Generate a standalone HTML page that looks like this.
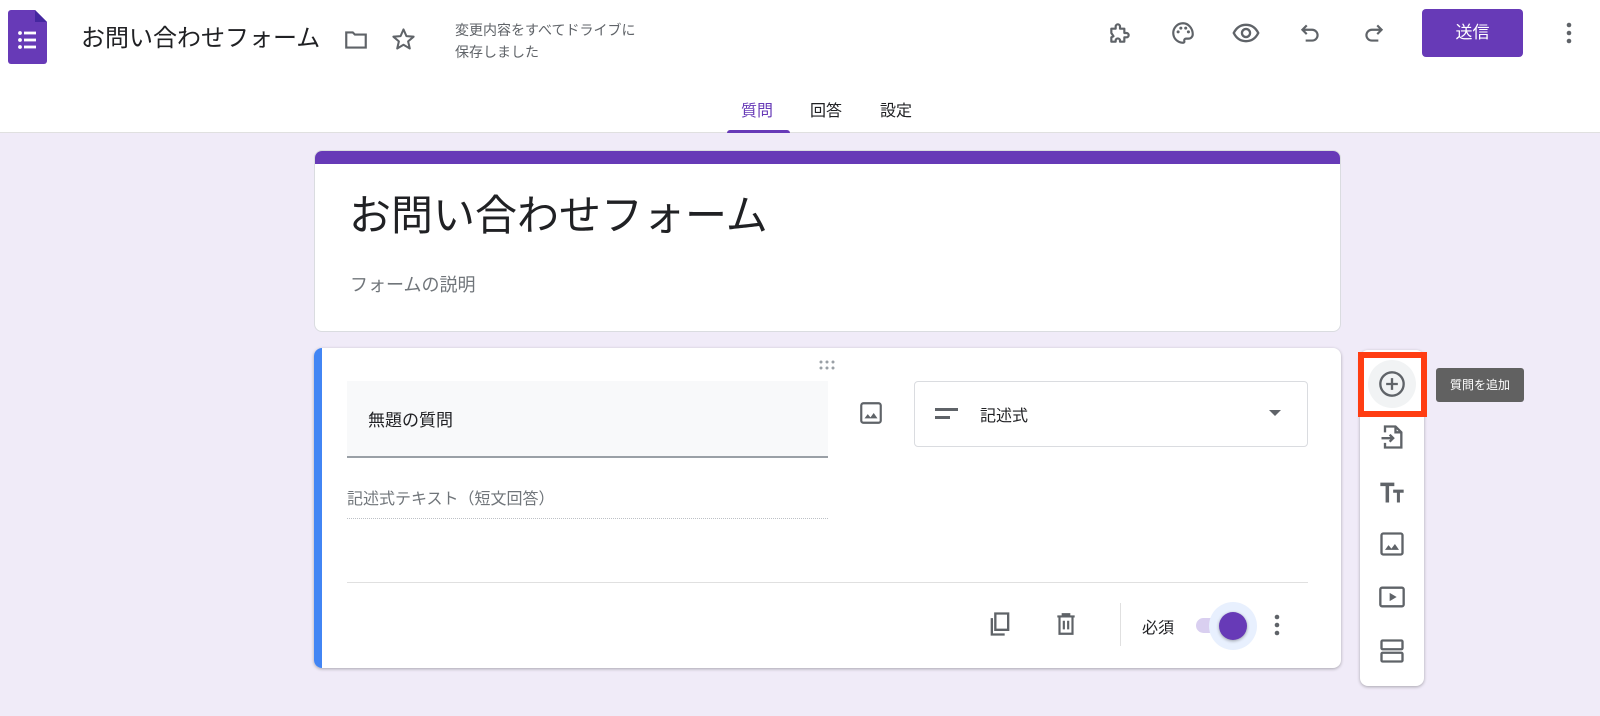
<!DOCTYPE html>
<html><head><meta charset="utf-8"><style>
*{margin:0;padding:0;box-sizing:border-box}
body{width:1600px;height:716px;background:#f0ebf8;font-family:"Liberation Sans","Noto Sans CJK JP",sans-serif;position:relative;overflow:hidden;color:#202124}
.a{position:absolute}
svg{display:block}
.ic{position:absolute}
</style></head><body>
<div class="a" style="left:0;top:0;width:1600px;height:133px;background:#fff;border-bottom:1px solid #e0e0e0"></div>
<!-- logo -->
<svg class="ic" style="left:8px;top:10px" width="39" height="54" viewBox="0 0 39 54"><path d="M3 0h24l12 12v39a3 3 0 0 1-3 3H3a3 3 0 0 1-3-3V3a3 3 0 0 1 3-3z" fill="#673ab7"/><path d="M27 0l12 12h-12z" fill="#4527a0"/><g fill="#fff"><circle cx="12" cy="23" r="1.9"/><circle cx="12" cy="30" r="1.9"/><circle cx="12" cy="37" r="1.9"/><rect x="16" y="21.6" width="12" height="2.8"/><rect x="16" y="28.6" width="12" height="2.8"/><rect x="16" y="35.6" width="12" height="2.8"/></g></svg>
<div class="a" style="left:81px;top:23px;font-size:24px;line-height:32px">お問い合わせフォーム</div>
<svg class="ic" style="left:342px;top:27px" width="28" height="26" viewBox="0 0 24 24"><path d="M3 5h6l2 2h10v12H3z" fill="none" stroke="#5f6368" stroke-width="2"/></svg>
<svg class="ic" style="left:390px;top:26px" width="27" height="27" viewBox="0 0 24 24"><path d="M12 3l2.6 6 6.4.5-4.9 4.2 1.5 6.3L12 16.7 6.4 20l1.5-6.3L3 9.5l6.4-.5z" fill="none" stroke="#5f6368" stroke-width="1.8" stroke-linejoin="round"/></svg>
<div class="a" style="left:455px;top:19px;font-size:14px;line-height:22px;color:#5f6368">変更内容をすべてドライブに<br>保存しました</div>
<!-- right icons -->
<svg class="ic" style="left:1107px;top:20px" width="26" height="26" viewBox="0 0 24 24"><path d="M4 8h4V6a2 2 0 0 1 4 0v2h4v4h2a2 2 0 0 1 0 4h-2v4h-4v-1a2 2 0 0 0-4 0v1H4v-4l2-1-2-3z" fill="none" stroke="#5f6368" stroke-width="2" stroke-linejoin="round"/></svg>
<svg class="ic" style="left:1170px;top:20px" width="26" height="26" viewBox="0 0 24 24"><path d="M12 3a9 9 0 0 0 0 18c1 0 1.5-.8 1.2-1.6-.4-1 .3-2.2 1.5-2.2H17a4 4 0 0 0 4-4c0-5.5-4-10.2-9-10.2z" fill="none" stroke="#5f6368" stroke-width="2"/><circle cx="7.5" cy="11" r="1.4" fill="#5f6368"/><circle cx="10" cy="7.5" r="1.4" fill="#5f6368"/><circle cx="14.5" cy="7.5" r="1.4" fill="#5f6368"/><circle cx="17" cy="11" r="1.4" fill="#5f6368"/></svg>
<svg class="ic" style="left:1232px;top:19px" width="28" height="28" viewBox="0 0 24 24"><path d="M1.5 12C4 7 8 5 12 5s8 2 10.5 7C20 17 16 19 12 19s-8-2-10.5-7z" fill="none" stroke="#5f6368" stroke-width="2"/><circle cx="12" cy="12" r="3.5" fill="none" stroke="#5f6368" stroke-width="2"/></svg>
<svg class="ic" style="left:1297px;top:20px" width="26" height="26" viewBox="0 0 24 24"><path d="M9 5L5 9l4 4M5 9h9a5 5 0 0 1 0 10H8" fill="none" stroke="#5f6368" stroke-width="2"/></svg>
<svg class="ic" style="left:1361px;top:20px" width="26" height="26" viewBox="0 0 24 24"><path d="M15 5l4 4-4 4M19 9h-9a5 5 0 0 0 0 10h6" fill="none" stroke="#5f6368" stroke-width="2"/></svg>
<div class="a" style="left:1422px;top:9px;width:101px;height:48px;background:#673ab7;border-radius:4px;color:#fff;font-size:17px;line-height:48px;text-align:center">送信</div>
<svg class="ic" style="left:1563px;top:20px" width="12" height="26" viewBox="0 0 12 26"><circle cx="6" cy="5" r="2.3" fill="#5f6368"/><circle cx="6" cy="13" r="2.3" fill="#5f6368"/><circle cx="6" cy="21" r="2.3" fill="#5f6368"/></svg>
<!-- tabs -->
<div class="a" style="left:741px;top:97px;font-size:16px;color:#673ab7">質問</div>
<div class="a" style="left:810px;top:97px;font-size:16px;color:#202124">回答</div>
<div class="a" style="left:880px;top:97px;font-size:16px;color:#202124">設定</div>
<div class="a" style="left:727px;top:130px;width:63px;height:3px;background:#673ab7;border-radius:3px 3px 0 0"></div>
<!-- title card -->
<div class="a" style="left:314px;top:150px;width:1027px;height:182px;background:#fff;border-radius:8px;border:1px solid #dadce0;overflow:hidden"><div style="height:13px;background:#673ab7"></div></div>
<div class="a" style="left:349px;top:190px;font-size:42px;line-height:52px;color:#202124">お問い合わせフォーム</div>
<div class="a" style="left:350px;top:271px;font-size:18px;color:#70757a">フォームの説明</div>
<!-- question card -->
<div class="a" style="left:314px;top:348px;width:1027px;height:320px;background:#fff;border-radius:8px;box-shadow:0 1px 3px rgba(0,0,0,.3);overflow:hidden"><div style="position:absolute;left:0;top:0;width:8px;height:100%;background:#4285f4"></div></div>
<svg class="ic" style="left:817px;top:359px" width="20" height="12" viewBox="0 0 20 12"><g fill="#9aa0a6"><circle cx="4" cy="3" r="1.5"/><circle cx="10" cy="3" r="1.5"/><circle cx="16" cy="3" r="1.5"/><circle cx="4" cy="9" r="1.5"/><circle cx="10" cy="9" r="1.5"/><circle cx="16" cy="9" r="1.5"/></g></svg>
<div class="a" style="left:347px;top:381px;width:481px;height:77px;background:#f8f9fa;border-bottom:2px solid #9aa0a6"></div>
<div class="a" style="left:368px;top:406px;font-size:17px">無題の質問</div>
<svg class="ic" style="left:858px;top:400px" width="26" height="26" viewBox="0 0 24 24"><rect x="3" y="3" width="18" height="18" rx="2" fill="none" stroke="#5f6368" stroke-width="2"/><path d="M6 17l3-4 2.5 3 3-4 3.5 5z" fill="#5f6368"/></svg>
<div class="a" style="left:914px;top:381px;width:394px;height:66px;border:1px solid #dadce0;border-radius:4px"></div>
<div class="a" style="left:935px;top:408px;width:23px;height:3px;background:#5f6368"></div>
<div class="a" style="left:935px;top:416px;width:15px;height:3px;background:#5f6368"></div>
<div class="a" style="left:980px;top:402px;font-size:16px">記述式</div>
<div class="a" style="left:1269px;top:410px;width:0;height:0;border-left:6px solid transparent;border-right:6px solid transparent;border-top:6px solid #5f6368"></div>
<div class="a" style="left:347px;top:485px;font-size:16px;color:#70757a">記述式テキスト（短文回答）</div>
<div class="a" style="left:347px;top:518px;width:481px;border-top:1px dotted #bdc1c6"></div>
<div class="a" style="left:347px;top:582px;width:961px;border-top:1px solid #e0e0e0"></div>
<svg class="ic" style="left:986px;top:610px" width="28" height="28" viewBox="0 0 24 24"><path d="M8 3h11v14H8z M5 7v14h11" fill="none" stroke="#5f6368" stroke-width="2"/></svg>
<svg class="ic" style="left:1053px;top:610px" width="26" height="28" viewBox="0 0 24 24"><path d="M4 5h16M9 5V3h6v2M6 5v16h12V5M10 9v8M14 9v8" fill="none" stroke="#5f6368" stroke-width="2"/></svg>
<div class="a" style="left:1120px;top:603px;width:1px;height:43px;background:#e0e0e0"></div>
<div class="a" style="left:1142px;top:614px;font-size:16px">必須</div>
<div class="a" style="left:1196px;top:618px;width:40px;height:15px;border-radius:8px;background:#d9cff0"></div>
<div class="a" style="left:1209px;top:602px;width:48px;height:48px;border-radius:50%;background:#e8f0fe"></div>
<div class="a" style="left:1219px;top:612px;width:28px;height:28px;border-radius:50%;background:#673ab7;box-shadow:0 1px 3px rgba(0,0,0,.35)"></div>
<svg class="ic" style="left:1271px;top:612px" width="12" height="26" viewBox="0 0 12 26"><circle cx="6" cy="5" r="2.3" fill="#5f6368"/><circle cx="6" cy="13" r="2.3" fill="#5f6368"/><circle cx="6" cy="21" r="2.3" fill="#5f6368"/></svg>
<!-- toolbar -->
<div class="a" style="left:1360px;top:350px;width:64px;height:336px;background:#fff;border-radius:8px;box-shadow:0 1px 3px rgba(0,0,0,.3)"></div>
<div class="a" style="left:1358px;top:352px;width:69px;height:65px;border:6px solid #ff3d12;background:#fff"></div>
<div class="a" style="left:1368px;top:360px;width:48px;height:48px;border-radius:50%;background:#f1f3f4"></div>
<svg class="ic" style="left:1378px;top:370px" width="28" height="28" viewBox="0 0 24 24"><circle cx="12" cy="12" r="10" fill="none" stroke="#5f6368" stroke-width="2"/><path d="M12 7v10M7 12h10" stroke="#5f6368" stroke-width="2"/></svg>
<svg class="ic" style="left:1378px;top:423px" width="28" height="28" viewBox="0 0 24 24"><path d="M6 8V3h9l5 5v13H6v-4M15 3v5h5M3 13h10M10 10l3 3-3 3" fill="none" stroke="#5f6368" stroke-width="2"/></svg>
<svg class="ic" style="left:1378px;top:478px" width="28" height="28" viewBox="0 0 24 24"><path d="M2 4h12v3H9.5v14h-3V7H2zM13 10h9v2.6h-3.2V21h-2.6v-8.4H13z" fill="#5f6368"/></svg>
<svg class="ic" style="left:1378px;top:530px" width="28" height="28" viewBox="0 0 24 24"><rect x="3" y="3" width="18" height="18" rx="1.5" fill="none" stroke="#5f6368" stroke-width="2"/><path d="M6 17l3-4 2.5 3 3-4 3.5 5z" fill="#5f6368"/></svg>
<svg class="ic" style="left:1378px;top:583px" width="28" height="28" viewBox="0 0 24 24"><rect x="2" y="4" width="20" height="16" rx="1.5" fill="none" stroke="#5f6368" stroke-width="2"/><path d="M10 8.5v7l6-3.5z" fill="#5f6368"/></svg>
<svg class="ic" style="left:1378px;top:637px" width="28" height="28" viewBox="0 0 24 24"><rect x="3" y="3" width="18" height="7.5" rx="1" fill="none" stroke="#5f6368" stroke-width="2"/><rect x="3" y="13.5" width="18" height="7.5" rx="1" fill="none" stroke="#5f6368" stroke-width="2"/></svg>
<div class="a" style="left:1436px;top:368px;width:88px;height:34px;background:#616161;border-radius:3px;color:#fff;font-size:12px;line-height:34px;text-align:center">質問を追加</div>
</body></html>
